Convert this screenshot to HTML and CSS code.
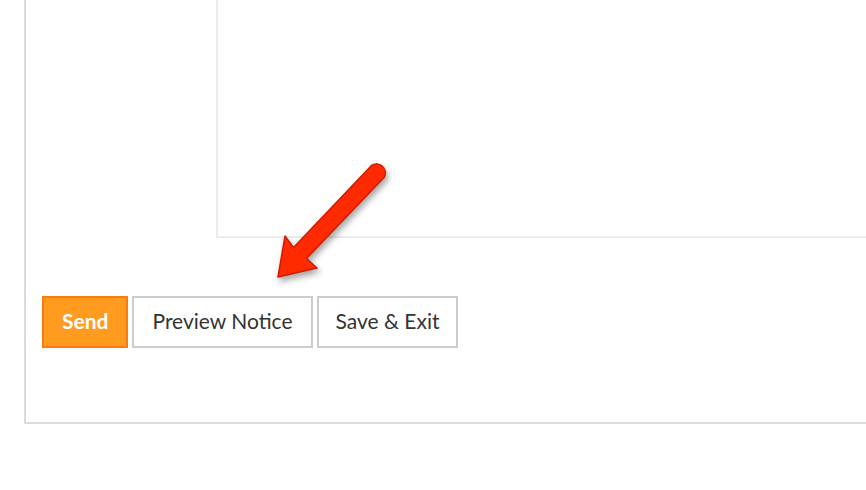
FILE: index.html
```html
<!DOCTYPE html>
<html>
<head>
<meta charset="utf-8">
<link rel="stylesheet" href="styles.css">
</head>
<body>
<div class="panel">
  <div class="editor"></div>
  <div class="actions">
    <button class="btn btn-primary">Send</button>
    <button class="btn">Preview Notice</button>
    <button class="btn btn-narrow">Save &amp; Exit</button>
  </div>
</div>
<svg class="arrow" width="140" height="140" viewBox="260 150 140 140" xmlns="http://www.w3.org/2000/svg">
  <path d="M278,277 L285,236 L293.5,247.5 L371.5,165.5 A9,9 0 0 1 384.5,177 L306.5,258.5 L317,268 Z" fill="#ff2a00" stroke="#d01c00" stroke-width="1.5" stroke-linejoin="round"/>
</svg>
</body>
</html>
```
FILE: styles.css
```css
html, body {
  margin: 0;
  padding: 0;
  background: #fff;
  overflow: hidden;
  width: 866px;
  height: 490px;
}
.panel {
  margin-left: 24px;
  height: 422px;
  border-left: 2px solid #dadde0;
  border-bottom: 2px solid #dadde0;
  display: flex;
  flex-direction: column;
}
.editor {
  margin-left: 190px;
  height: 236px;
  border-left: 2px solid #ececec;
  border-bottom: 2px solid #ececec;
}
.actions {
  margin-top: 58px;
  padding-left: 16px;
  display: flex;
  gap: 4px;
}
.btn {
  height: 52px;
  padding: 0 18px 3px;
  background: #fff;
  border: 2px solid #cccccc;
  border-radius: 0;
  font-family: Lato, "Liberation Sans", sans-serif;
  font-size: 21px;
  color: #333;
  cursor: pointer;
}
.btn-narrow {
  padding-left: 17px;
  padding-right: 16px;
}
.btn-primary {
  background: #ff9c20;
  border-color: #ff7a0e;
  color: #fff;
  font-weight: 700;
}
.arrow {
  position: absolute;
  left: 260px;
  top: 150px;
  overflow: visible;
  filter: drop-shadow(2px 4px 3px rgba(0,0,0,0.35));
}
```
